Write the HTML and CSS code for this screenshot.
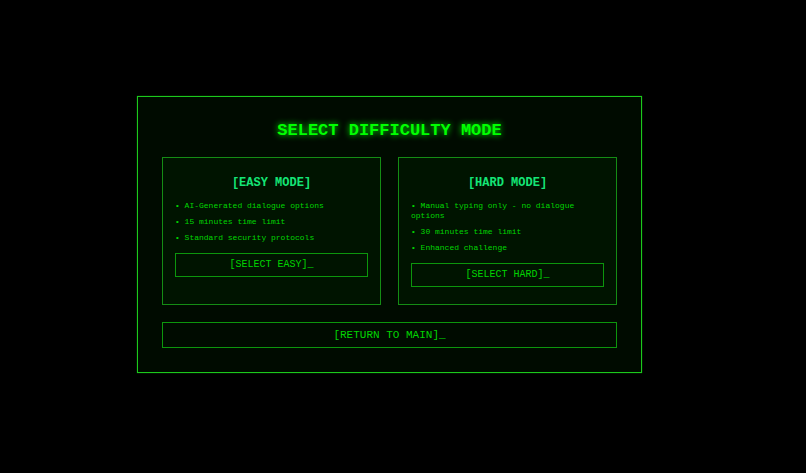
FILE: index.html
```html
<!DOCTYPE html>
<html lang="en">
<head>
<meta charset="utf-8">
<meta name="viewport" content="width=device-width, initial-scale=1">
<title>Select Difficulty Mode</title>
<link rel="stylesheet" href="styles.css">
</head>
<body>
<main class="panel">
  <h1 class="title">SELECT DIFFICULTY MODE</h1>
  <div class="modes">
    <section class="card">
      <h2 class="card-title">[EASY MODE]</h2>
      <ul class="features">
        <li>• AI-Generated dialogue options</li>
        <li>• 15 minutes time limit</li>
        <li>• Standard security protocols</li>
      </ul>
      <button class="btn" type="button">[SELECT EASY]_</button>
    </section>
    <section class="card">
      <h2 class="card-title">[HARD MODE]</h2>
      <ul class="features">
        <li>• Manual typing only - no dialogue options</li>
        <li>• 30 minutes time limit</li>
        <li>• Enhanced challenge</li>
      </ul>
      <button class="btn" type="button">[SELECT HARD]_</button>
    </section>
  </div>
  <button class="btn btn-wide" type="button">[RETURN TO MAIN]_</button>
</main>
</body>
</html>
```
FILE: styles.css
```css
* {
  box-sizing: border-box;
}

body {
  margin: 0;
  min-height: 100vh;
  padding: 16px 27px 21px 0;
  display: flex;
  align-items: center;
  justify-content: center;
  background: #000;
  color: #00d400;
  font-family: "Courier New", Courier, "Liberation Mono", monospace;
}

.panel {
  width: 100%;
  max-width: 505px;
  padding: 24px;
  border: 1px solid #1cc81c;
  background: #000b00;
  box-shadow: 0 0 1px #0a8a0a;
}

.title {
  margin: 0 0 16px;
  font-size: 17px;
  line-height: 20px;
  text-align: center;
  color: #0f0;
  text-shadow: 0 0 6px #0f0;
}

.modes {
  display: grid;
  grid-template-columns: 1fr 1fr;
  gap: 17px;
  margin-bottom: 17px;
}

.card {
  padding: 18px 12px 17px;
  border: 1px solid #148c14;
  background: #001400;
}

.card-title {
  margin: 0 0 11px;
  font-size: 12px;
  line-height: 14px;
  text-align: center;
  color: #14e676;
}

.features {
  list-style: none;
  margin: 0 0 10px;
  padding: 0 12px 0 0;
  font-size: 8px;
  line-height: 10px;
}

.features li {
  margin-bottom: 6px;
}

.btn {
  display: block;
  width: 100%;
  padding: 5px 12px;
  border: 1px solid #0c960c;
  border-radius: 0;
  background: transparent;
  color: #00d400;
  font-family: inherit;
  font-size: 10px;
  line-height: 12px;
  text-align: center;
  cursor: pointer;
}

.btn-wide {
  padding: 6px 12px;
  font-size: 11px;
}

@media (max-width: 480px) {
  body {
    padding: 16px;
  }

  .modes {
    grid-template-columns: 1fr;
  }
}
```
